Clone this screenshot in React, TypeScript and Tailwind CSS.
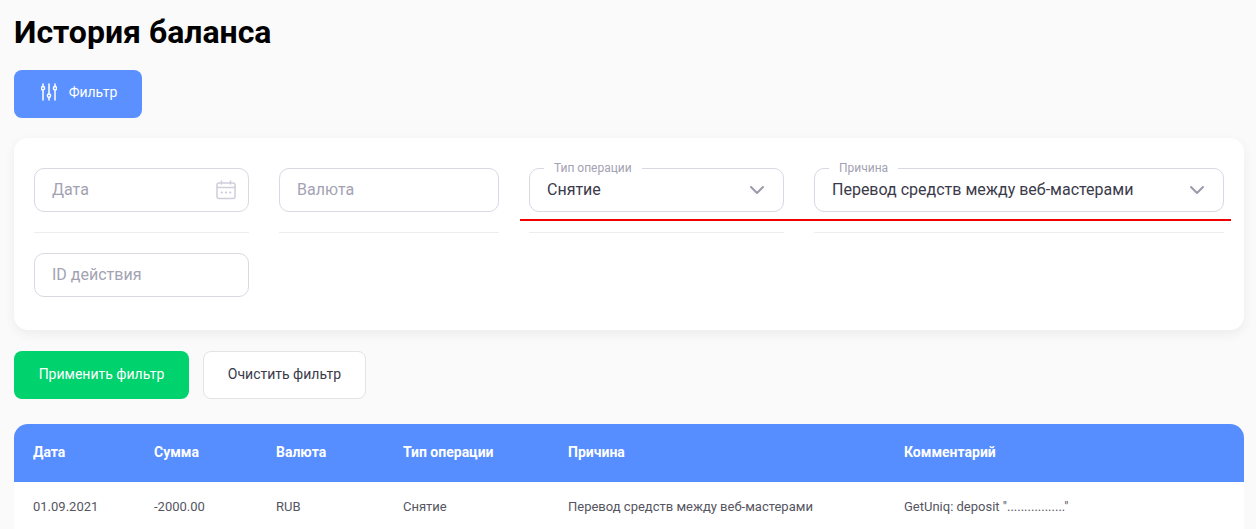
import { ChevronDown } from "lucide-react";

const columns = ["Дата", "Сумма", "Валюта", "Тип операции", "Причина", "Комментарий"];
const row = [
  "01.09.2021",
  "-2000.00",
  "RUB",
  "Снятие",
  "Перевод средств между веб-мастерами",
  'GetUniq: deposit "................."',
];

function FilterIcon() {
  return (
    <svg width="16" height="18" viewBox="0 0 16 18" fill="none" stroke="white" strokeWidth="1.5" strokeLinecap="round">
      <path d="M2 1v2.5M2 7v10M8 1v10M8 14.5V17M14 1v2.5M14 7v10" />
      <circle cx="2" cy="5.2" r="1.6" />
      <circle cx="8" cy="12.7" r="1.6" />
      <circle cx="14" cy="5.2" r="1.6" />
    </svg>
  );
}

function CalendarIcon() {
  return (
    <svg width="20" height="20" viewBox="0 0 20 20" fill="none" stroke="#cfcedc" strokeWidth="1.5" strokeLinecap="round">
      <rect x="1" y="3" width="18" height="15.5" rx="2" />
      <path d="M1 7.5h18M5.5 1v3M14.5 1v3" />
      <path d="M5.5 12.5h.5M9.75 12.5h.5M14 12.5h.5" strokeWidth="1.8" />
    </svg>
  );
}

function TextField({ label, width, children }: { label: string; width: string; children?: React.ReactNode }) {
  return (
    <div className={`${width} flex h-11 items-center justify-between rounded-[10px] border border-[#d9d8e3] pl-[17px] pr-[12px]`}>
      <span className="text-base text-[#a3a2b3]">{label}</span>
      {children}
    </div>
  );
}

function SelectField({ label, value, width }: { label: string; value: string; width: string }) {
  return (
    <div className={`${width} relative flex h-11 items-center justify-between rounded-[10px] border border-[#d9d8e3] pl-[17px] pr-[14px]`}>
      <span className="absolute -top-[8px] left-[14px] bg-white px-[10px] text-xs leading-[14px] text-[#a3a2b3]">{label}</span>
      <span className="text-base text-[#3a3a4a]">{value}</span>
      <ChevronDown className="h-6 w-6 text-[#9b9aab]" strokeWidth={2} />
    </div>
  );
}

export default function App() {
  return (
    <div className="h-[529px] overflow-hidden bg-[#fafafa] pl-[14px] pr-[12px] font-['Roboto',sans-serif]">
      <h1 className="pt-[12px] text-[32px] font-bold leading-[40px] text-black">История баланса</h1>

      <button className="mt-[18px] flex h-12 w-[128px] items-center justify-center gap-[12px] rounded-[8px] bg-[#5a90ff] pb-[4px] pl-[2px] text-sm text-white">
        <FilterIcon />
        Фильтр
      </button>

      {/* Filter card */}
      <div className="relative mt-[20px] h-[192px] rounded-[14px] bg-white pl-[20px] pr-[20px] pt-[30px] shadow-[0_4px_12px_rgba(0,0,0,0.06)]">
        <div className="flex gap-[30px]">
          <div className="w-[215px] border-b border-[#ececf1] pb-[20px]">
            <TextField label="Дата" width="w-full">
              <CalendarIcon />
            </TextField>
          </div>
          <div className="w-[220px] border-b border-[#ececf1] pb-[20px]">
            <TextField label="Валюта" width="w-full" />
          </div>
          <div className="w-[255px] border-b border-[#ececf1] pb-[20px]">
            <SelectField label="Тип операции" value="Снятие" width="w-full" />
          </div>
          <div className="w-[410px] border-b border-[#ececf1] pb-[20px]">
            <SelectField label="Причина" value="Перевод средств между веб-мастерами" width="w-full" />
          </div>
        </div>
        <div className="mt-[20px]">
          <TextField label="ID действия" width="w-[215px]" />
        </div>
        {/* red annotation line */}
        <div className="absolute left-[506px] top-[81px] h-[2px] w-[711px] bg-[#f00000]" />
      </div>

      <div className="mt-[21px] flex gap-[14px]">
        <button className="h-12 w-[175px] rounded-[8px] bg-[#00d26e] pb-[3px] text-sm text-white">Применить фильтр</button>
        <button className="h-12 w-[163px] rounded-[8px] border border-[#e3e3e8] bg-white pb-[3px] text-sm text-[#3a3a4a]">Очистить фильтр</button>
      </div>

      {/* Table */}
      <div className="mt-[25px] overflow-hidden rounded-t-[14px] bg-white">
        <div className="grid h-[58px] grid-cols-[121px_122px_127px_165px_336px_1fr] items-center bg-[#568dff] pb-[2px] pl-[19px] text-sm font-bold text-white">
          {columns.map((c) => (
            <div key={c}>{c}</div>
          ))}
        </div>
        <div className="grid h-[50px] grid-cols-[121px_122px_127px_165px_336px_1fr] items-center pl-[19px] text-[13px] text-[#55555f]">
          {row.map((c) => (
            <div key={c}>{c}</div>
          ))}
        </div>
      </div>
    </div>
  );
}
